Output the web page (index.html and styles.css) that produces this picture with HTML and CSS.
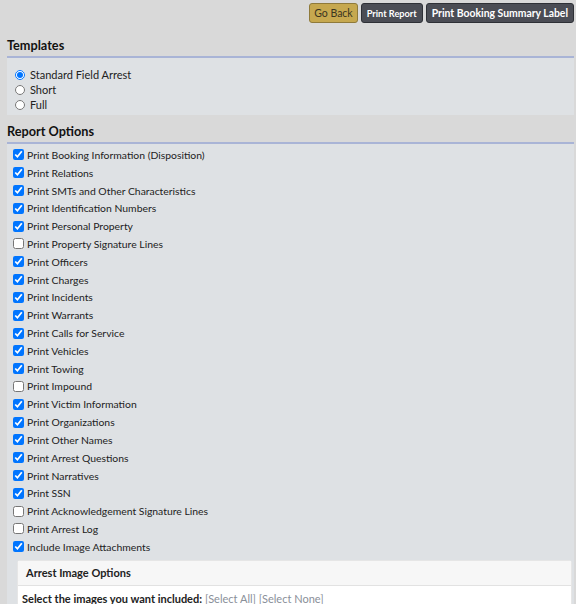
FILE: index.html
```html
<!DOCTYPE html>
<html>
<head>
<meta charset="utf-8">
<link rel="stylesheet" href="styles.css">
</head>
<body>
<div class="toolbar">
  <button class="btn btn-gold">Go Back</button>
  <button class="btn btn-dark btn-small">Print Report</button>
  <button class="btn btn-dark">Print Booking Summary Label</button>
</div>

<h2 class="section-title first">Templates</h2>
<div class="panel templates">
  <label class="opt"><input type="radio" name="tpl" checked> Standard Field Arrest</label>
  <label class="opt"><input type="radio" name="tpl"> Short</label>
  <label class="opt"><input type="radio" name="tpl"> Full</label>
</div>

<h2 class="section-title">Report Options</h2>
<div class="panel options">
  <label class="chk"><input type="checkbox" checked>Print Booking Information (Disposition)</label>
  <label class="chk"><input type="checkbox" checked>Print Relations</label>
  <label class="chk"><input type="checkbox" checked>Print SMTs and Other Characteristics</label>
  <label class="chk"><input type="checkbox" checked>Print Identification Numbers</label>
  <label class="chk"><input type="checkbox" checked>Print Personal Property</label>
  <label class="chk"><input type="checkbox">Print Property Signature Lines</label>
  <label class="chk"><input type="checkbox" checked>Print Officers</label>
  <label class="chk"><input type="checkbox" checked>Print Charges</label>
  <label class="chk"><input type="checkbox" checked>Print Incidents</label>
  <label class="chk"><input type="checkbox" checked>Print Warrants</label>
  <label class="chk"><input type="checkbox" checked>Print Calls for Service</label>
  <label class="chk"><input type="checkbox" checked>Print Vehicles</label>
  <label class="chk"><input type="checkbox" checked>Print Towing</label>
  <label class="chk"><input type="checkbox">Print Impound</label>
  <label class="chk"><input type="checkbox" checked>Print Victim Information</label>
  <label class="chk"><input type="checkbox" checked>Print Organizations</label>
  <label class="chk"><input type="checkbox" checked>Print Other Names</label>
  <label class="chk"><input type="checkbox" checked>Print Arrest Questions</label>
  <label class="chk"><input type="checkbox" checked>Print Narratives</label>
  <label class="chk"><input type="checkbox" checked>Print SSN</label>
  <label class="chk"><input type="checkbox">Print Acknowledgement Signature Lines</label>
  <label class="chk"><input type="checkbox">Print Arrest Log</label>
  <label class="chk"><input type="checkbox" checked>Include Image Attachments</label>

  <div class="image-box">
    <div class="image-head">Arrest Image Options</div>
    <div class="image-body">
      <b>Select the images you want included:</b>
      <span class="links">[Select All] [Select None]</span>
    </div>
  </div>
</div>
</body>
</html>
```

FILE: styles.css
```css
html, body {
  margin: 0;
  padding: 0;
  background: #d9d9d9;
  font-family: Lato, "Open Sans", sans-serif;
  font-size: 11px;
  color: #222;
}
body {
  padding: 0 2px 0 7px;
}
.toolbar {
  display: flex;
  justify-content: flex-end;
  gap: 3px;
  padding-top: 3px;
  height: 20px;
}
.btn {
  height: 20px;
  padding: 0 5px;
  border-radius: 3px;
  font-family: Lato, sans-serif;
  font-size: 10.4px;
  cursor: pointer;
}
.btn-gold {
  background: #c6a84f;
  border: 1px solid #8f7a3a;
  color: #3a3520;
  font-size: 10.5px;
  padding: 0 4px;
}
.btn-dark {
  background: #4b4d55;
  border: 1px solid #2e3036;
  color: #fff;
  font-weight: 700;
}
.btn-small {
  font-size: 9.2px;
  padding: 0 5px;
}
.section-title {
  margin: 0;
  padding: 8px 0 3px 0;
  font-size: 12.7px;
  font-weight: 700;
  color: #111;
  border-bottom: 2px solid #a9b4d6;
  line-height: 16px;
}
.section-title.first {
  padding-top: 14px;
}
.panel {
  background: #dee1e4;
}
.templates {
  display: flex;
  flex-direction: column;
  padding: 9px 0 3px 8px;
  height: 45px;
}
.opt {
  display: flex;
  align-items: center;
  height: 15.5px;
  gap: 3px;
}
.opt input {
  margin: 0 2px 0 0;
  width: 10px;
  height: 10px;
}
.options {
  padding: 2px 0 0 5px;
  display: flex;
  flex-direction: column;
}
.chk {
  display: flex;
  align-items: center;
  height: 17.82px;
  font-size: 10.4px;
}
.chk input {
  margin: 0 3px 0 1px;
  width: 11px;
  height: 11px;
}
.image-box {
  margin: 4px 2px 0 5px;
  background: #fff;
  border: 1px solid #e6e6e6;
  border-radius: 3px 3px 0 0;
}
.image-head {
  background: #f7f7f7;
  border-bottom: 1px solid #e2e2e2;
  font-weight: 700;
  padding: 5px 8px;
  line-height: 14px;
}
.image-body {
  padding: 6px 4px;
  line-height: 14px;
}
.links {
  color: #8a8f99;
}
```
